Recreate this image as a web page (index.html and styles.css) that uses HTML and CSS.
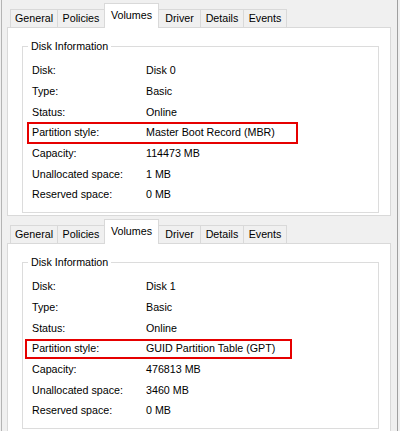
FILE: index.html
```html
<!DOCTYPE html>
<html>
<head>
<meta charset="utf-8">
<link rel="stylesheet" href="styles.css">
</head>
<body>
<div class="frame">
  <div class="section">
    <div class="tabs">
      <div class="tab t-general">General</div>
      <div class="tab t-policies">Policies</div>
      <div class="tab active t-volumes">Volumes</div>
      <div class="tab t-driver">Driver</div>
      <div class="tab t-details">Details</div>
      <div class="tab t-events">Events</div>
    </div>
    <div class="panel">
      <div class="group">
        <div class="legend">Disk Information</div>
        <div class="rows">
          <div>Disk:</div><div>Disk 0</div>
          <div>Type:</div><div>Basic</div>
          <div>Status:</div><div>Online</div>
          <div>Partition style:</div><div>Master Boot Record (MBR)</div>
          <div>Capacity:</div><div>114473 MB</div>
          <div>Unallocated space:</div><div>1 MB</div>
          <div>Reserved space:</div><div>0 MB</div>
        </div>
        <div class="mark mark-1"></div>
      </div>
    </div>
  </div>
  <div class="section">
    <div class="tabs">
      <div class="tab t-general">General</div>
      <div class="tab t-policies">Policies</div>
      <div class="tab active t-volumes">Volumes</div>
      <div class="tab t-driver">Driver</div>
      <div class="tab t-details">Details</div>
      <div class="tab t-events">Events</div>
    </div>
    <div class="panel">
      <div class="group">
        <div class="legend">Disk Information</div>
        <div class="rows">
          <div>Disk:</div><div>Disk 1</div>
          <div>Type:</div><div>Basic</div>
          <div>Status:</div><div>Online</div>
          <div>Partition style:</div><div>GUID Partition Table (GPT)</div>
          <div>Capacity:</div><div>476813 MB</div>
          <div>Unallocated space:</div><div>3460 MB</div>
          <div>Reserved space:</div><div>0 MB</div>
        </div>
        <div class="mark mark-2"></div>
      </div>
    </div>
  </div>
</div>
</body>
</html>
```
FILE: styles.css
```css
html, body {
  margin: 0;
  padding: 0;
  background: #f0f0f0;
}
body {
  font-family: "Liberation Sans", Arial, sans-serif;
  font-size: 10.7px;
  color: #000;
  width: 400px;
  height: 431px;
  overflow: hidden;
}
.frame {
  margin-left: 1px;
  width: 397px;
  height: 431px;
  box-sizing: border-box;
  border-left: 1px solid #b4b4b4;
  border-right: 1px solid #a0a0a0;
  overflow: hidden;
}
.section {
  height: 216px;
  padding-left: 5px;
}
.tabs {
  display: flex;
  align-items: flex-end;
  height: 27px;
  padding-left: 3px;
}
.tab {
  box-sizing: border-box;
  height: 18px;
  border-top: 1px solid #d9d9d9;
  border-left: 1px solid #d9d9d9;
  background: #f0f0f0;
  text-align: center;
  line-height: 17px;
  white-space: nowrap;
}
.t-general { width: 47px; }
.t-policies { width: 47px; }
.t-volumes { width: 55px; }
.t-driver { width: 41px; border-left: none; }
.t-details { width: 43px; }
.t-events { width: 44px; border-right: 1px solid #d9d9d9; }
.tab.active {
  position: relative;
  z-index: 1;
  height: 25px;
  margin-bottom: -1px;
  background: #fff;
  border-right: 1px solid #d9d9d9;
  line-height: 23px;
}
.panel {
  box-sizing: border-box;
  width: 384px;
  height: 189px;
  border: 1px solid #d9d9d9;
  background: #fff;
  padding: 18px 0 0 14px;
}
.group {
  position: relative;
  box-sizing: border-box;
  width: 357px;
  height: 167px;
  border: 1px solid #dcdcdc;
}
.legend {
  width: max-content;
  margin: -8px 0 0 5px;
  padding: 0 3px;
  background: #fff;
  line-height: 15px;
}
.rows {
  display: grid;
  grid-template-columns: 114px 1fr;
  grid-auto-rows: 20.67px;
  align-items: center;
  margin-top: 6px;
  padding-left: 9px;
  white-space: nowrap;
}
.mark {
  position: absolute;
  box-sizing: border-box;
  border: 2px solid #e60000;
}
.mark-1 {
  left: 4px;
  top: 75px;
  width: 271px;
  height: 22px;
}
.mark-2 {
  left: 2px;
  top: 76px;
  width: 267px;
  height: 20px;
}
```
